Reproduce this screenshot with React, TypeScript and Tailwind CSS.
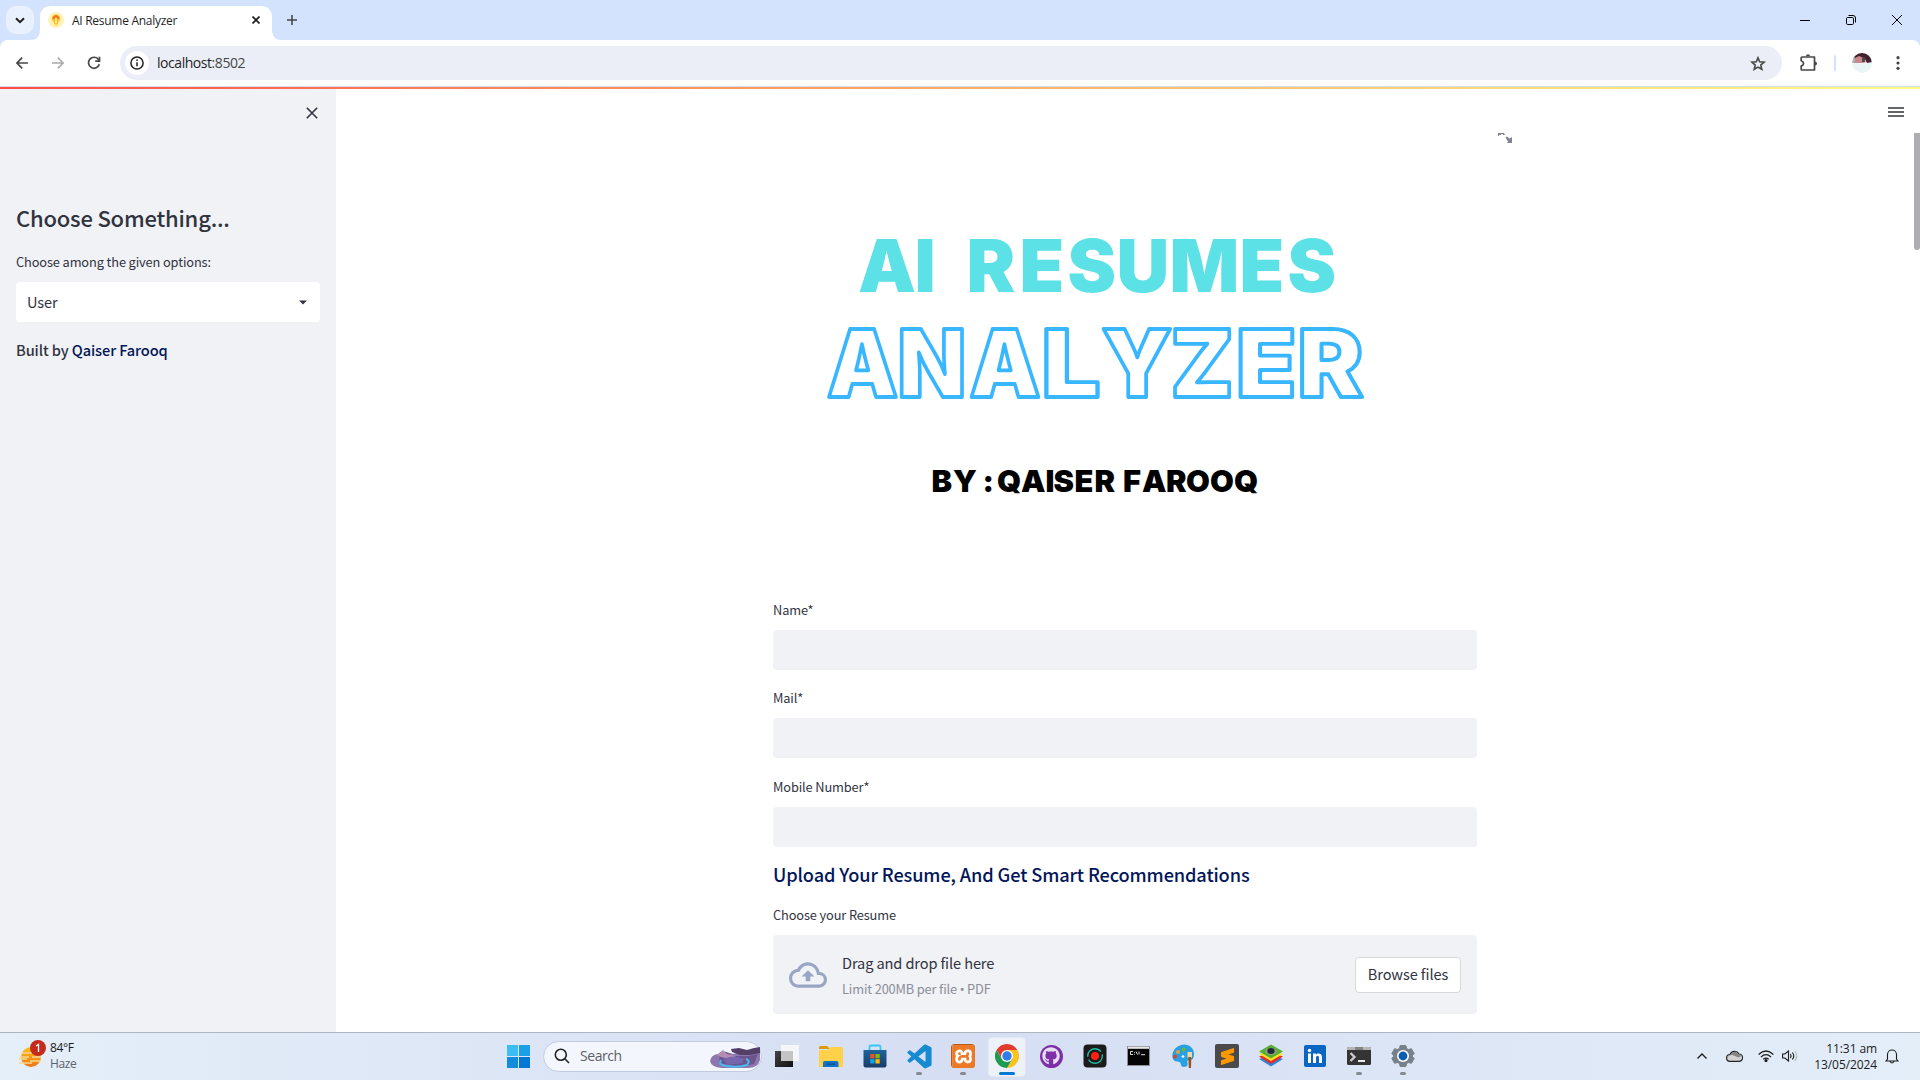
import React from 'react';
import { FaGithub } from 'react-icons/fa';
import { SiXampp, SiSublimetext } from 'react-icons/si';
import { BiLogoVisualStudio } from 'react-icons/bi';
import { MdOutlineCloudUpload } from 'react-icons/md';

function TabStrip() {
  return (
    <div className="flex h-10 w-full shrink-0 items-center bg-[#d3e3fd] pl-1.5 text-[#1f1f1f]">
      <div className="flex size-7 items-center justify-center rounded-[10px] bg-[#e9f0fe]">
        <svg width="10" height="7" viewBox="0 0 10 7" fill="none" stroke="#1f1f1f" strokeWidth="2">
          <path d="M1 1.2 5 5.2 9 1.2" />
        </svg>
      </div>
      <div className="relative ml-1.5 mt-1.5 flex h-[34px] w-[232px] items-center rounded-t-[10px] bg-white pb-1.5 pl-2">
        <svg className="absolute bottom-0 -left-2.5" width="10" height="10" viewBox="0 0 10 10">
          <path d="M10 0v10H0Q10 10 10 0" fill="#fff" />
        </svg>
        <svg className="absolute bottom-0 -right-2.5" width="10" height="10" viewBox="0 0 10 10">
          <path d="M0 0v10h10Q0 10 0 0" fill="#fff" />
        </svg>
        <svg width="16" height="16" viewBox="0 0 16 16">
          <circle cx="8" cy="8" r="8" fill="#fff3b8" />
          <path d="M8 2.2a4.200 4.200 0 0 0-2.600 7.400L6.300 12h3.400l.9-2.400A4.200 4.200 0 0 0 8 2.200z" fill="#fdbf2d" />
          <path d="M4.400 6a3.700 3.700 0 0 1 7.200 0L10 7.500 8 5 6 7.500z" fill="#f4791f" />
          <path d="M7 6h2v5H7z" fill="#ffe27a" />
          <path d="M6.500 11.500h3v2.300h-3z" fill="#ffd84d" />
        </svg>
        <span className="ml-2 mt-0.5 w-[105px] whitespace-nowrap font-['Open_Sans',sans-serif] text-[12px] leading-4 tracking-[-0.28px]">
          AI Resume Analyzer
        </span>
        <svg className="ml-[75px]" width="8" height="8" viewBox="0 0 8 8" stroke="#1f1f1f" strokeWidth="1.700">
          <path d="m.5.5 7 7m0-7-7 7" />
        </svg>
      </div>
      <svg className="ml-[15px]" width="10" height="10" viewBox="0 0 10 10" stroke="#474747" strokeWidth="1.600">
        <path d="M5 0v10M0 5h10" />
      </svg>
      <div className="ml-auto flex items-center text-black">
        <svg width="10" height="10" viewBox="0 0 10 10" stroke="#000">
          <path d="M0 5.500h10" />
        </svg>
        <svg className="ml-9" width="10" height="10" viewBox="0 0 10 10" fill="none" stroke="#000">
          <rect x=".5" y="2.500" width="7" height="7" rx="1.200" />
          <path d="M2.500.5H7A2.500 2.500 0 0 1 9.500 3v4.500" />
        </svg>
        <svg className="ml-9 mr-[18px]" width="10" height="10" viewBox="0 0 10 10" stroke="#000">
          <path d="m0 0 10 10M10 0 0 10" />
        </svg>
      </div>
    </div>
  );
}

function Toolbar() {
  return (
    <div className="w-full shrink-0 bg-[#d3e3fd]">
      <div className="flex h-[46px] items-center rounded-t-[8px] bg-white pl-4">
        <svg width="12" height="12" viewBox="0 0 12 12" fill="none" stroke="#474747" strokeWidth="1.700">
          <path d="M12 6H1.200M6.200.6.9 6l5.300 5.400" />
        </svg>
        <svg className="ml-6" width="12" height="12" viewBox="0 0 12 12" fill="none" stroke="#ababab" strokeWidth="1.500">
          <path d="M0 6h10.800M5.800.6 11.100 6l-5.300 5.400" />
        </svg>
        <svg className="ml-[23px]" width="14" height="14" viewBox="0 0 14 14" fill="none" stroke="#474747" strokeWidth="1.700">
          <path d="M12.300 8.200A5.500 5.500 0 1 1 11.500 3.600L12.600 5" />
          <path d="M12.500.8v4.400H8.200" />
        </svg>
        <div className="ml-[19px] flex h-[34px] w-[1662px] items-center rounded-full bg-[#ebeef7] pl-[5px]">
          <div className="flex size-6 items-center justify-center rounded-full bg-white">
            <svg width="14" height="14" viewBox="0 0 14 14" fill="none" stroke="#1f1f1f" strokeWidth="1.500">
              <circle cx="7" cy="7" r="6.100" />
              <path d="M7 6.200v4M7 3.600v1.500" />
            </svg>
          </div>
          <span className="ml-2 font-['Open_Sans',sans-serif] text-[14px] leading-5 tracking-[-0.45px] text-[#454746]">
            <span className="text-[#1f1f1f]">localhost</span>:8502
          </span>
          <svg className="ml-auto mr-[16px]" width="16" height="15" viewBox="0 0 16 15" fill="none" stroke="#474747" strokeWidth="1.600">
            <path d="m8 1.800 1.700 4 4.400.4-3.300 2.900 1 4.200L8 11.100l-3.800 2.200 1-4.200-3.300-2.900 4.400-.4z" />
          </svg>
        </div>
        <svg className="ml-[18px]" width="18" height="18" viewBox="0 0 18 18">
          <path
            d="M2 3h12.500v13H2q-.8 0-.8-.8V12q2.300-.8 2.300-2.600T1.200 6.800v-3Q1.200 3 2 3z"
            fill="none"
            stroke="#474747"
            strokeWidth="1.700"
            strokeLinejoin="round"
          />
          <path d="M6 2.300a2 2 0 0 1 4 0zM15 7.500a2 2 0 0 1 0 4z" fill="#474747" />
        </svg>
        <div className="ml-[16px] h-4 w-0.5 rounded bg-[#d3e3fd]" />
        <svg className="ml-4" width="20" height="20" viewBox="0 0 20 20">
          <clipPath id="avatar">
            <circle cx="10" cy="10" r="10" />
          </clipPath>
          <g clipPath="url(#avatar)">
            <path fill="#e9f5f7" d="M0 0h20v20H0z" />
            <path fill="#40202c" d="M3 0h15l2 9-5 1-2-4-7-2-5 3z" />
            <path fill="#c98a8b" d="M3 5l4-2 5 2 2 4-3 1H1z" />
            <path fill="#5d4252" d="M10 4h3v5h-3z" />
            <path fill="#a8b7c6" d="m0 5 3-2-1 7H0z" />
          </g>
        </svg>
        <svg className="ml-6" width="4" height="14" viewBox="0 0 4 14" fill="#474747">
          <circle cx="2" cy="1.700" r="1.600" />
          <circle cx="2" cy="7" r="1.600" />
          <circle cx="2" cy="12.300" r="1.600" />
        </svg>
      </div>
    </div>
  );
}

function Sidebar() {
  return (
    <aside className="flex w-[336px] shrink-0 flex-col bg-[#f0f2f6] px-4 text-[#31333f]">
      <div className="flex h-[52px] items-center justify-end pr-0.5">
        <svg width="12" height="12" viewBox="0 0 12 12" stroke="#31333f" strokeWidth="1.600">
          <path d="m.8.8 10.400 10.400m0-10.400L.8 11.200" />
        </svg>
      </div>
      <h2 className="mt-[62px] h-8 whitespace-nowrap text-[22px] font-medium leading-8 tracking-[-0.2px]">Choose Something...</h2>
      <label className="mt-[19px] h-5 text-[12.800px] leading-5 tracking-[-0.12px]">Choose among the given options:</label>
      <div className="mt-[10px] flex h-10 items-center justify-between rounded-[4px] bg-white pl-[11px] pr-[13px]">
        <span className="text-[14.600px] leading-6 tracking-[-0.15px]">User</span>
        <svg width="8" height="5" viewBox="0 0 8 5">
          <path d="M0 .5h8l-4 4z" fill="#31333f" />
        </svg>
      </div>
      <p className="mt-4 h-6 text-[14.600px] font-medium leading-6 tracking-[-0.1px]">
        Built by <span className="text-[#021659]">Qaiser Farooq</span>
      </p>
    </aside>
  );
}

type BannerLineProps = {
  children: string;
  xs: number[];
  y: number;
  size: number;
  stretch: number;
  fill: string;
  outline?: string;
};

/* Draws a run of banner letters with adjusted width, each starting at its own x. */
function BannerLine({ children, xs, y, size, stretch, fill, outline }: BannerLineProps) {
  return (
    <text
      transform={`scale(${stretch} 1)`}
      x={xs.map((x) => x / stretch).join(' ')}
      y={y}
      fontSize={size}
      fill={fill}
      stroke={outline ?? 'none'}
      strokeWidth={outline ? 3.8 : 0}
      strokeLinejoin="round"
    >
      {children}
    </text>
  );
}

function Banner() {
  return (
    <svg
      className="block"
      width="704"
      height="400"
      viewBox="773 180 704 400"
      fontFamily="Inter, sans-serif"
      fontWeight="900"
      role="img"
      aria-label="AI Resumes Analyzer by Qaiser Farooq"
    >
      <BannerLine xs={[858, 914.500, 966.500, 1019.500, 1067.500, 1116.500, 1169.500, 1239.500, 1287.500]} y={291.700} size={73} stretch={1} fill="#5ce1e6">
        AIRESUMES
      </BannerLine>
      <BannerLine xs={[827, 897.500, 969.500]} y={397} size={93} stretch={0.96} fill="#fff" outline="#38b6ff">
        ANA
      </BannerLine>
      <BannerLine xs={[1041.500]} y={397} size={93} stretch={1.12} fill="#fff" outline="#38b6ff">
        L
      </BannerLine>
      <BannerLine xs={[1101.500, 1170.500]} y={397} size={93} stretch={0.98} fill="#fff" outline="#38b6ff">
        YZ
      </BannerLine>
      <BannerLine xs={[1236, 1297.500]} y={397} size={93} stretch={1.06} fill="#fff" outline="#38b6ff">
        ER
      </BannerLine>
      <BannerLine
        xs={[931.500, 953, 982.500, 997, 1021, 1045.500, 1053.500, 1074.500, 1094.500, 1123, 1142, 1166, 1186, 1210, 1234]}
        y={492}
        size={30.500}
        stretch={1.01}
        fill="#000"
      >
        BY:QAISERFAROOQ
      </BannerLine>
    </svg>
  );
}

function Field({ label }: { label: string }) {
  return (
    <div className="flex h-[88.400px] flex-col">
      <label className="h-5 text-[12.800px] leading-5 tracking-[-0.12px]">{label}</label>
      <div className="mt-[10px] h-10 rounded-[4px] bg-[#f0f2f6]" />
    </div>
  );
}

function Main() {
  return (
    <main className="relative flex grow justify-start bg-white pl-[437px] text-[#31333f]">
      <div className="w-[704px] pt-[93px]">
        <Banner />
        <div className="mt-5 flex flex-col">
          <Field label="Name*" />
          <Field label="Mail*" />
          <Field label="Mobile Number*" />
        </div>
        <h5 className="-mt-[5px] h-7 whitespace-nowrap text-[18.200px] font-medium leading-7 tracking-[-0.12px] text-[#021659]">
          Upload Your Resume, And Get Smart Recommendations
        </h5>
        <div className="mt-[17px] h-5 text-[12.800px] leading-5 tracking-[-0.12px]">Choose your Resume</div>
        <div className="mt-[10px] flex h-[79px] items-center rounded-[4px] bg-[#f0f2f6] px-4">
          <MdOutlineCloudUpload size={38} className="text-[#97a6c3]" />
          <div className="ml-[15px] flex flex-col gap-1">
            <span className="text-[14.600px] leading-6 tracking-[-0.12px]">Drag and drop file here</span>
            <span className="text-[12.800px] leading-5 tracking-[-0.14px] text-[#8c8e98]">
              Limit 200MB per file <span className="font-['Noto_Sans',sans-serif]">•</span> PDF
            </span>
          </div>
          <button className="ml-auto h-9 w-[106px] rounded-[4px] border border-[#d6d8dc] bg-white pb-0.5 text-[14.600px] leading-6 tracking-[-0.1px]">
            Browse files
          </button>
        </div>
      </div>
      <svg className="absolute left-[1162px] top-[46px]" width="14" height="10" viewBox="0 0 14 10" fill="#808495">
        <path d="M0 0h6l1 2H5V1H3v1H1v1H0zM7.500 4.500 9 3.500l2.500 2L14 4v6H9l1-1.500z" />
      </svg>
      <svg className="absolute right-4 top-[20px]" width="16" height="10" viewBox="0 0 16 10" stroke="#31333f" strokeWidth="1.700">
        <path d="M0 1h16M0 5h16M0 9h16" />
      </svg>
      <div className="absolute right-0 top-[46px] h-[117px] w-1.5 rounded-b-full bg-[#adadb2]" />
    </main>
  );
}

function TaskItem({ children, running, active }: { children: React.ReactNode; running?: boolean; active?: boolean }) {
  return (
    <div className="relative flex h-12 w-11 items-center justify-center">
      {active && <div className="absolute inset-x-[3px] bottom-[3px] top-[5px] rounded-[4px] border border-[#e3e7f3] bg-[#edf1fa]" />}
      <div className="relative flex items-center justify-center">{children}</div>
      {active && <div className="absolute bottom-[5px] h-[3px] w-4 rounded-full bg-[#0078d4]" />}
      {running && <div className="absolute bottom-[5px] h-[3px] w-1.5 rounded-full bg-[#868a94]" />}
    </div>
  );
}

function TaskIcons() {
  return (
    <div className="flex">
      <TaskItem>
        <svg width="24" height="24" viewBox="0 0 24 24">
          <defs>
            <linearGradient id="tv" x2="1" y2="1">
              <stop stopColor="#444" />
              <stop offset="1" stopColor="#111" />
            </linearGradient>
          </defs>
          <path fill="url(#tv)" d="M0 7h18v16H0z" />
          <path fill="#f7f7f8" fillOpacity=".95" d="M6 1h18v16H6z" />
          <path fill="#c4c4c6" d="M6 7h12v10H6z" />
        </svg>
      </TaskItem>
      <TaskItem>
        <svg width="24" height="24" viewBox="0 0 24 24">
          <path fill="#d99a0b" d="M0 3.500Q0 2 1.500 2H8l3 3H0z" />
          <path fill="#ffd04a" d="M0 6h9l2.500-3H22.500Q24 3 24 4.500V21.500Q24 23 22.500 23H1.500Q0 23 0 21.500z" />
          <path fill="#1272c4" d="M4 23v-4q0-2 2-2h11.500q2 0 2 2v4z" />
          <path fill="#0a4f93" d="M7.500 19.500h8.500v1.300H7.500z" />
        </svg>
      </TaskItem>
      <TaskItem>
        <svg width="24" height="24" viewBox="0 0 24 24">
          <defs>
            <linearGradient id="store" x2="0" y2="1">
              <stop stopColor="#1f659e" />
              <stop offset="1" stopColor="#1b3b66" />
            </linearGradient>
          </defs>
          <path d="M6.500 7V3q0-1.500 1.500-1.500h8Q17.500 1.500 17.500 3v4" fill="none" stroke="#39c6f5" strokeWidth="1.800" />
          <path d="M.5 6h23v15.500q0 2-2 2h-19q-2 0-2-2z" fill="url(#store)" />
          <path fill="#f04e23" d="M7.200 10h4.300v4.300H7.200z" />
          <path fill="#80bb03" d="M12.400 10h4.300v4.300h-4.300z" />
          <path fill="#06a5ef" d="M7.200 15.200h4.300v4.300H7.200z" />
          <path fill="#ffba08" d="M12.400 15.200h4.300v4.300h-4.300z" />
        </svg>
      </TaskItem>
      <TaskItem running>
        <BiLogoVisualStudio size={29} className="text-[#168bd2]" />
      </TaskItem>
      <TaskItem running>
        <div className="flex size-6 items-center justify-center rounded-[3px] border border-[#b65d1b] bg-white">
          <SiXampp size={23} className="shrink-0 text-[#ee7a28]" />
        </div>
      </TaskItem>
      <TaskItem active>
        <svg width="24" height="24" viewBox="0 0 24 24">
          <path fill="#e33b2e" d="M12 0a12 12 0 0 1 10.400 6H12L6.800 15 1.600 6A12 12 0 0 1 12 0" />
          <path fill="#fcc31e" d="M22.400 6A12 12 0 0 1 12 24l5.200-9L12 6z" />
          <path fill="#1e9b50" d="M1.600 6A12 12 0 0 0 12 24l5.200-9H6.800z" />
          <circle cx="12" cy="12" r="6" fill="#fff" />
          <circle cx="12" cy="12" r="4.700" fill="#2f7de9" />
        </svg>
      </TaskItem>
      <TaskItem>
        <div className="flex size-[23px] items-center justify-center rounded-full bg-[#7d2fa6]">
          <FaGithub size={18} className="text-[#e6ddf5]" />
        </div>
      </TaskItem>
      <TaskItem>
        <svg width="24" height="24" viewBox="0 0 24 24">
          <rect x=".5" y=".5" width="23" height="23" rx="4" fill="#1b1b1c" />
          <circle cx="12" cy="12" r="7.300" fill="none" stroke="#1db7a0" strokeWidth="1.400" strokeDasharray="19 3" />
          <circle cx="12" cy="12" r="4" fill="#ff2011" />
        </svg>
      </TaskItem>
      <TaskItem>
        <svg className="mr-0.5" width="23" height="20" viewBox="0 0 23 20">
          <path fill="#8d8f92" d="M0 0h23v20H0z" />
          <path fill="#e6e6e6" d="M1 .7h21v1.800H1z" />
          <path fill="#050505" d="M1 3h21v16H1z" />
          <path fill="none" stroke="#ddd" strokeWidth="1" d="M6 5.500H3.500v3H6M7.500 6v.8m0 1v.8M9 5.500l1.500 3M14 8.700h4M12 5.500v3" />
        </svg>
      </TaskItem>
      <TaskItem>
        <svg width="24" height="24" viewBox="0 0 24 24">
          <path fill="#27a1e4" d="M13 .5c6 0 10 4 10 9.500 0 5-2 6-4.500 6-2 0-2.500 1-2 3s0 4-4 4c-3 0-2-3-3.500-4.500S3.500 18.500 2 15C-1 8 6 .5 13 .5" />
          <circle cx="12.500" cy="5.500" r="2" fill="#6fb52c" />
          <circle cx="7" cy="8" r="2" fill="#e8a031" />
          <circle cx="4" cy="12.500" r="2" fill="#d8442d" />
          <path d="M12 11v3m-1.500-1.500h3" stroke="#fff" strokeWidth="1.200" />
          <path fill="#f2d5aa" d="M16.500 8h4.500v6h-4.500z" />
          <path fill="#96531e" d="M17.300 13h3l-.3 11h-2.200z" />
        </svg>
      </TaskItem>
      <TaskItem>
        <div className="flex size-6 items-center justify-center rounded-[2px] bg-[#4a4a4a]">
          <SiSublimetext size={17} className="text-[#ff9800]" />
        </div>
      </TaskItem>
      <TaskItem>
        <svg width="24" height="24" viewBox="0 0 24 24">
          <path fill="#2f83d8" d="m0 15 12-4 12 4-12 7.500z" />
          <path fill="#e52d27" d="m0 12.500 12-4 12 4-12 7.500z" />
          <path fill="#ffe11f" d="m0 10 12-4 12 4-12 7z" />
          <path fill="#58ae30" d="M0 7.500 12 .5l12 7-12 7z" />
          <ellipse cx="12" cy="7.300" rx="5.800" ry="3.600" fill="#8ca486" />
          <ellipse cx="12" cy="7" rx="3.700" ry="3" fill="#222b31" />
        </svg>
      </TaskItem>
      <TaskItem>
        <svg width="22" height="22" viewBox="0 0 22 22">
          <rect width="22" height="22" rx="2" fill="#0a66c2" />
          <path fill="#fff" d="M4 8.500h3V18H4zM9 8.500h2.800v1.300C13 8 18 7.400 18 12.200V18h-3v-5c0-3-3-2.700-3 0v5H9z" />
          <circle cx="5.500" cy="5.500" r="1.700" fill="#fff" />
        </svg>
      </TaskItem>
      <TaskItem running>
        <svg width="24" height="20" viewBox="0 0 24 20">
          <rect y="1" width="24" height="18" rx="1.500" fill="#343434" />
          <path fill="#b5b5b5" d="M0 4V2q0-1 1-1h22q1 0 1 1v2z" />
          <path fill="#858585" d="M8 1h8v3H8z" />
          <path d="m3.500 7 4 4-4 4" fill="none" stroke="#ccc" strokeWidth="2.400" />
          <path d="M11 15h7" stroke="#fff" strokeWidth="1.800" />
        </svg>
      </TaskItem>
      <TaskItem running>
        <svg width="24" height="24" viewBox="0 0 24 24">
          <path
            fill="#78818a"
            stroke="#78818a"
            strokeLinejoin="round"
            d="M9.200 1.500h5.600l.8 3 1.800 1 3-.8 2.800 4.800-2.200 2.500 2.200 2.500-2.800 4.800-3-.8-1.800 1-.8 3H9.200l-.8-3-1.800-1-3 .8-2.800-4.800L3 12 .8 9.500l2.800-4.800 3 .8 1.800-1z"
          />
          <circle cx="12" cy="12" r="6" fill="#fff" />
          <circle cx="12" cy="12" r="4.400" fill="#0a5cb5" />
        </svg>
      </TaskItem>
    </div>
  );
}

function Taskbar() {
  return (
    <footer className="relative flex h-12 w-full shrink-0 items-center bg-linear-to-r from-[#e4eff9] via-[#d6def3] to-[#e3eef9] font-['Open_Sans',sans-serif] text-[#1b1b1b] shadow-[inset_0_1px_0_#adb5c2]">
      <div className="relative ml-[19px] flex w-[190px] items-center">
        <svg className="-mt-[5px]" width="28" height="28" viewBox="0 0 28 28">
          <defs>
            <linearGradient id="sun" x2="0" y2="1">
              <stop stopColor="#fcc419" />
              <stop offset="1" stopColor="#ee7414" />
            </linearGradient>
          </defs>
          <circle cx="12" cy="17" r="10" fill="url(#sun)" />
          <path d="M3 13h10M16 13h6M1 17h9m3 0h9M0 19h8m3 2h11M0 23h13" stroke="#f6d692" strokeWidth="1.300" />
          <circle cx="19" cy="8" r="8" fill="#c42b1c" />
          <path d="m17 6 2.500-1.500V12" fill="none" stroke="#fff" strokeWidth="1.300" />
        </svg>
        <div className="ml-[3px] flex flex-col text-[12px] leading-4 tracking-[-0.35px]">
          <span>84°F</span>
          <span className="text-[#5d636b]">Haze</span>
        </div>
      </div>
      <div className="ml-[298px] grid size-[23px] grid-cols-2 gap-px">
        <div className="bg-[#3cbdf4]" />
        <div className="bg-[#1d9fe6]" />
        <div className="bg-[#128ddd]" />
        <div className="bg-[#0477d2]" />
      </div>
      <div className="ml-[13px] flex h-[31px] w-[219px] items-center rounded-full border border-[#c3cbdf] bg-[#f3f6fc] pl-2.5">
        <svg width="16" height="16" viewBox="0 0 16 16" fill="none" stroke="#222" strokeWidth="1.600">
          <circle cx="6.800" cy="6.800" r="5.500" />
          <path d="m10.800 10.800 4.200 4.200" />
        </svg>
        <span className="ml-[10px] text-[14px] leading-5 tracking-[-0.45px] text-[#5c6068]">Search</span>
        <svg className="ml-auto mr-px mt-0.5" width="50" height="22" viewBox="0 0 50 22">
          <path fill="#8e77ae" d="M0 15q1-6 8-7l5-3 10 3 12-3 15-3v12q-2 8-12 8H12Q1 21 0 15" />
          <path fill="#543f67" d="m21 3 8-1 8 2 7-2 6-1v6l-10 2-10 0-8-3z" />
          <path fill="#6c568f" d="M10 6h6l8 4h14l10-2-4 10-15 3-20-4z" />
          <path fill="#b28db4" d="m7 9 6-5 4 4 9 2-6 3-9-2z" />
          <path fill="none" stroke="#49b9f0" strokeWidth="2" d="M11 14q-3 5 5 6 12 2 21-1 4-4-1-6" />
          <path fill="#7766ae" d="M13 13q10-5 21 0l-2 4-14 2z" />
        </svg>
      </div>
      <div className="ml-[3px]">
        <TaskIcons />
      </div>
      <div className="ml-auto flex items-center">
        <svg width="10" height="6" viewBox="0 0 10 6" fill="none" stroke="#1b1b1b" strokeWidth="1.300">
          <path d="M.5 5.500 5 1l4.500 4.500" />
        </svg>
        <svg className="ml-[19px]" width="17" height="12" viewBox="0 0 17 12">
          <path d="M4 11.300a3.400 3.400 0 0 1 0-6.800 5 5 0 0 1 9-.5 3.600 3.600 0 0 1 0 7.300z" fill="#d3d3d3" stroke="#222" strokeWidth="1.200" />
          <path d="M1.500 7.500q2-3 5-2.500l6 2.500L15.500 6 12.500 4 9 1.500 5 3.500z" fill="#858585" />
        </svg>
        <svg className="ml-[15px]" width="16" height="12" viewBox="0 0 16 12" fill="none" stroke="#1b1b1b" strokeWidth="1.200">
          <path d="M.6 4.500q7.400-7 14.800 0M3 7q5-4.600 10 0M5.300 9.300q2.700-2.400 5.400 0" />
          <circle cx="8" cy="10.500" r="1" fill="#1b1b1b" />
        </svg>
        <svg className="ml-[8px]" width="16" height="12" viewBox="0 0 16 12" fill="none" stroke="#1b1b1b" strokeWidth="1.100">
          <path d="M.6 4v4h2.200L6.500 11V1L2.800 4zM8.300 4q1.500 2 0 4M10.300 2.500q3 3.500 0 7" />
          <path d="M12.800 1q4 5 0 10" stroke="#adb5bd" />
        </svg>
        <div className="ml-[17px] mt-px flex w-[62px] flex-col items-end whitespace-nowrap text-[12px] leading-4 tracking-[-0.1px]">
          <span>11:31 am</span>
          <span>13/05/2024</span>
        </div>
        <svg className="ml-2 mr-[21px]" width="14" height="15" viewBox="0 0 14 15" fill="none" stroke="#1b1b1b" strokeWidth="1.100">
          <path d="M2.500 10V5.500a4.500 4.500 0 0 1 9 0V10l1.500 2H1zM5 12.500q2 3 4 0" />
        </svg>
      </div>
    </footer>
  );
}

export default function App() {
  return (
    <div className="flex h-[1080px] w-[1920px] flex-col overflow-hidden bg-white font-['Noto_Sans_CJK_SC',sans-serif]">
      <TabStrip />
      <Toolbar />
      <div className="h-px w-full shrink-0 bg-[#d5dcea]" />
      <div className="relative flex min-h-0 w-full grow">
        <Sidebar />
        <Main />
        <div className="absolute inset-x-0 top-0 h-0.5 bg-linear-to-r from-[#ff4b4b] to-[#fffd80]" />
      </div>
      <Taskbar />
    </div>
  );
}
